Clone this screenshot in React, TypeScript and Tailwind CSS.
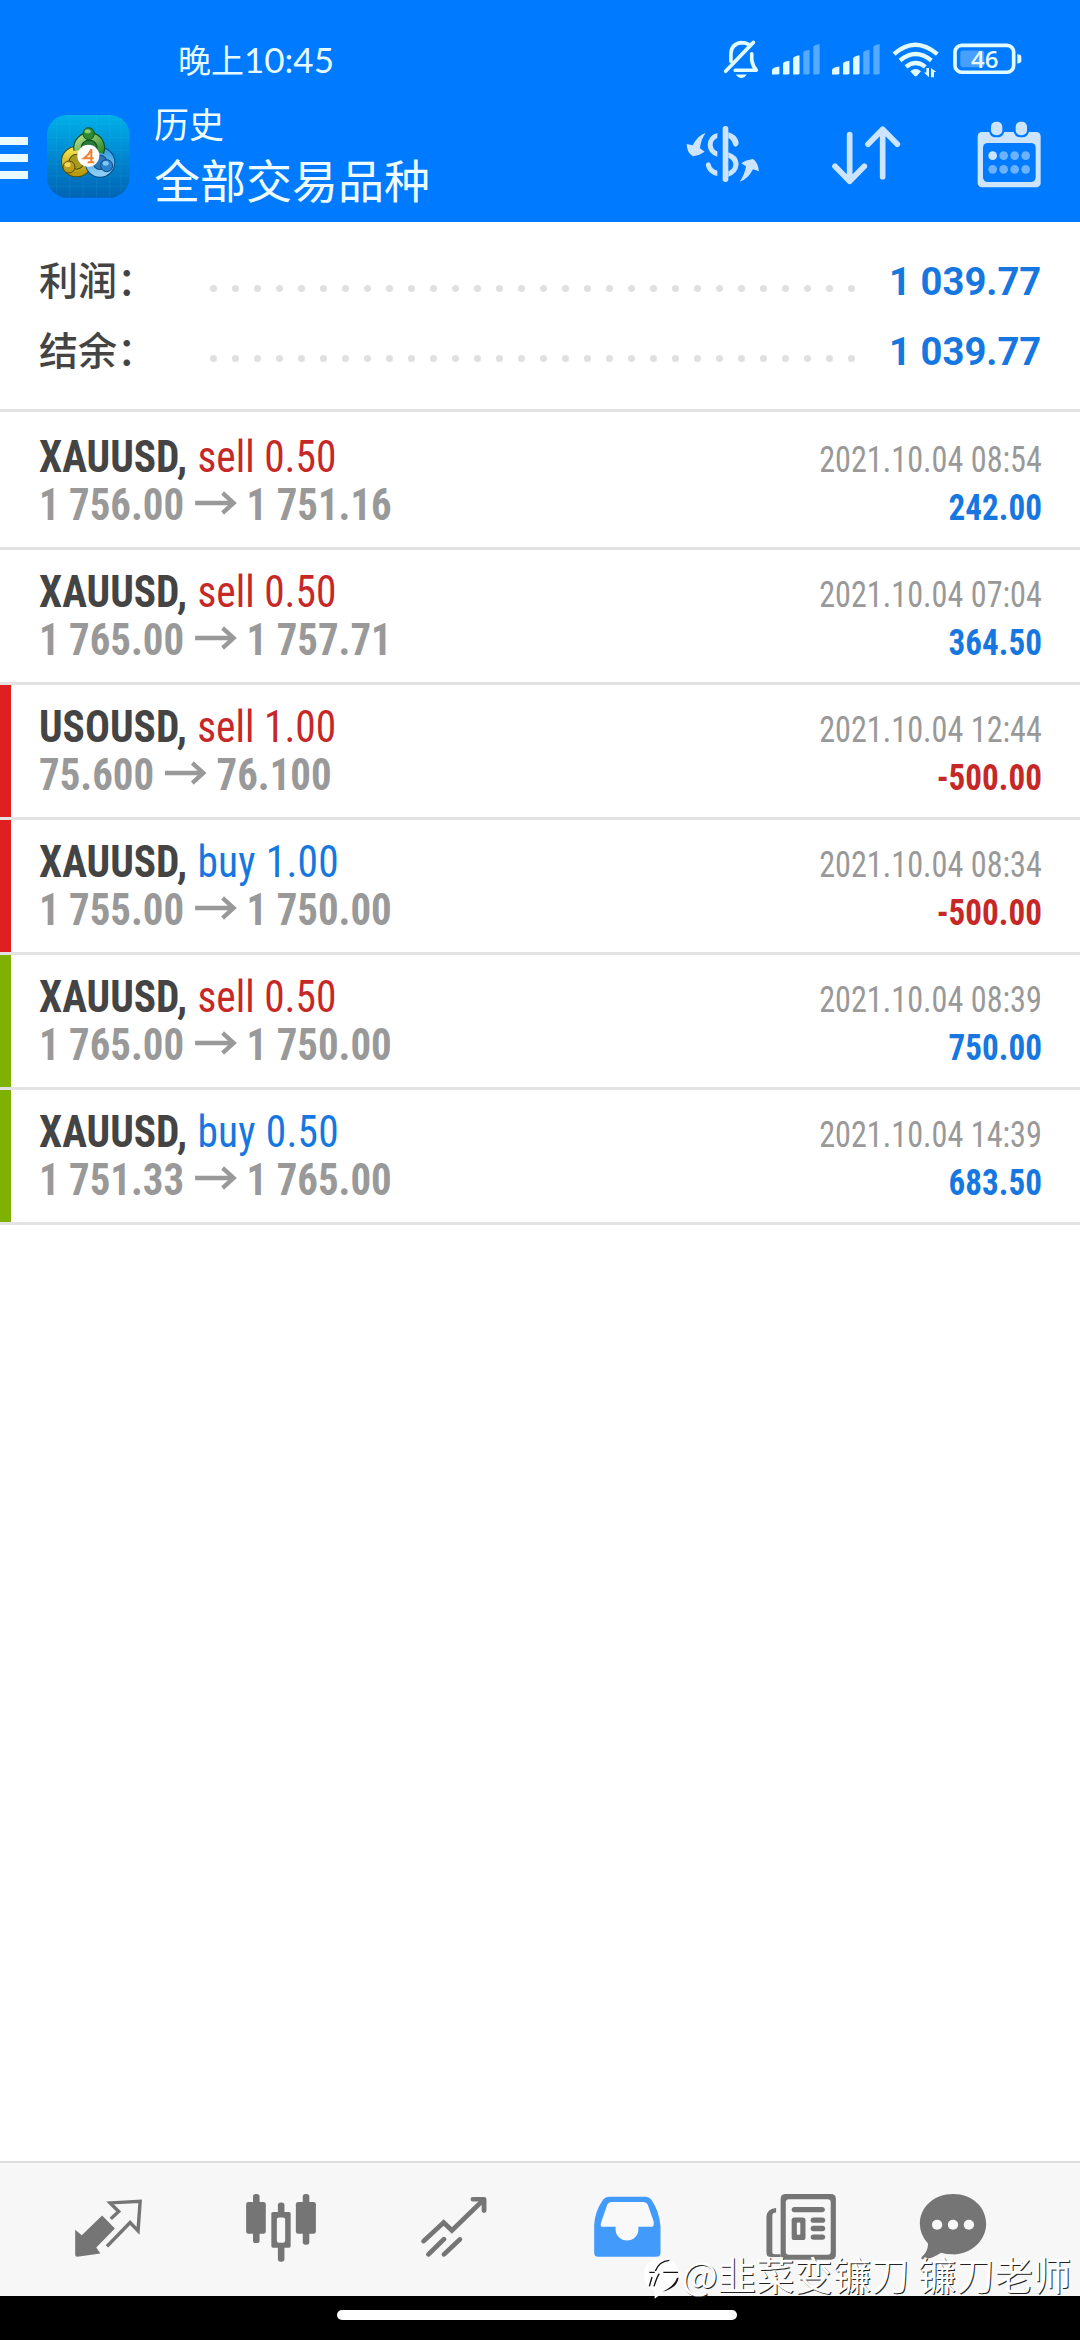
import React from 'react';

interface Deal {
  symbol: string;
  side: 'sell' | 'buy';
  volume: string;
  open: string;
  close: string;
  time: string;
  profit: string;
  mark?: 'sl' | 'tp';
}

const deals: Deal[] = [
  { symbol: 'XAUUSD,', side: 'sell', volume: '0.50', open: '1 756.00', close: '1 751.16', time: '2021.10.04 08:54', profit: '242.00' },
  { symbol: 'XAUUSD,', side: 'sell', volume: '0.50', open: '1 765.00', close: '1 757.71', time: '2021.10.04 07:04', profit: '364.50' },
  { symbol: 'USOUSD,', side: 'sell', volume: '1.00', open: '75.600', close: '76.100', time: '2021.10.04 12:44', profit: '-500.00', mark: 'sl' },
  { symbol: 'XAUUSD,', side: 'buy', volume: '1.00', open: '1 755.00', close: '1 750.00', time: '2021.10.04 08:34', profit: '-500.00', mark: 'sl' },
  { symbol: 'XAUUSD,', side: 'sell', volume: '0.50', open: '1 765.00', close: '1 750.00', time: '2021.10.04 08:39', profit: '750.00', mark: 'tp' },
  { symbol: 'XAUUSD,', side: 'buy', volume: '0.50', open: '1 751.33', close: '1 765.00', time: '2021.10.04 14:39', profit: '683.50', mark: 'tp' },
];

const Signal = () => (
  <svg className="w-[52px] h-[42px]" viewBox="325 115 155 125" preserveAspectRatio="none" fill="#e2fbff">
    <path d="M331 224V210Q333 202 353 200V220Q352 224 347 224Z" />
    <path d="M364 224V191Q366 185 383 183V220Q382 224 377 224Z" />
    <path d="M394 224V175Q396 169 413 166V220Q412 224 407 224Z" />
    <path d="M424 224V158Q426 152 443 150V220Q442 224 437 224Z" fill="#55a9ff" />
    <path d="M454 224V142Q456 136 473 133V220Q472 224 467 224Z" fill="#55a9ff" />
  </svg>
);

const StatusBar = () => (
  <div className="flex h-[100px] items-start pl-[178px] pr-[57px]">
    <span className="mt-[35px] text-[33px] leading-[48px] text-[#e6fbff]">
      晚上<span className="font-['Lato','Noto_Sans_CJK_SC',sans-serif] text-[35px]">10:45</span>
    </span>
    <div className="mt-[38px] ml-auto flex">
      <svg className="mr-[10px] w-[38px] h-[42px]" viewBox="180 115 115 125" preserveAspectRatio="none" fill="none" stroke="#e2fbff" strokeWidth="11" strokeLinecap="round" strokeLinejoin="round">
        <path d="M191 214L275 128" />
        <path d="M207 184V162Q208 133 238 129Q252 129 260 134" />
        <path d="M270 162V181Q273 199 284 211H220" />
        <path d="M222 224H255Q249 234 239 235Q228 234 222 224Z" fill="#e2fbff" stroke="none" />
      </svg>
      <div className="mr-[8px]"><Signal /></div>
      <div className="mr-[9px]"><Signal /></div>
      <svg className="mr-[11px] w-[50px] h-[42px]" viewBox="688 115 150 125" preserveAspectRatio="none" fill="none" stroke="#e2fbff" strokeWidth="13">
        <path d="M697 163Q760 107 827 163" />
        <path d="M715 182Q762 143 809 182" />
        <path d="M733 201Q762 178 791 201" />
        <path d="M746 214Q762 201 778 214L766 227Q762 230 758 227Z" fill="#e2fbff" stroke="none" />
        <path d="M802 204V232L787 218H794V204ZM808 232V204L824 216H817V232Z" fill="#e2fbff" stroke="none" />
      </svg>
      <div className="relative">
        <svg className="w-[71px] h-[42px]" viewBox="872 115 213 125" preserveAspectRatio="none">
          <rect x="881" y="137" width="176" height="80" rx="20" fill="none" stroke="#e2fbff" strokeWidth="11" />
          <rect x="897" y="152" width="72" height="50" rx="8" fill="#479fff" />
          <path d="M1068 163Q1080 163 1080 171V183Q1080 191 1068 191Z" fill="#e2fbff" />
        </svg>
        <span className="absolute left-[19px] top-[8px] font-['Open_Sans',sans-serif] text-[24px] leading-[26px] font-semibold text-[#e8fcff]">46</span>
      </div>
    </div>
  </div>
);

const Logo = () => (
  <svg className="h-[83px] w-[83px]" viewBox="50 45 249 249">
    <defs>
      <linearGradient id="tile" x1="0" y1="0" x2="0" y2="1">
        <stop offset="0" stopColor="#00b0e8" />
        <stop offset="0.5" stopColor="#0088d0" />
        <stop offset="1" stopColor="#0064b4" />
      </linearGradient>
      <linearGradient id="green" x1="0" y1="0" x2="1" y2="1">
        <stop offset="0" stopColor="#b5e08a" />
        <stop offset="1" stopColor="#2d8a2a" />
      </linearGradient>
      <linearGradient id="yellow" x1="0" y1="0" x2="0" y2="1">
        <stop offset="0" stopColor="#f2e04a" />
        <stop offset="1" stopColor="#b99a10" />
      </linearGradient>
      <linearGradient id="sky" x1="0" y1="0" x2="0" y2="1">
        <stop offset="0" stopColor="#3a9fe0" />
        <stop offset="1" stopColor="#8ccdf5" />
      </linearGradient>
    </defs>
    <rect x="50" y="45" width="248" height="248" rx="60" fill="url(#tile)" />
    <path d="M78 60V280M118 45V293M158 45V293M198 45V293M238 45V293M272 60V280M52 72H296M50 112H298M50 152H298M50 192H298M50 228H298M55 260H293" stroke="#4cc4f4" strokeOpacity="0.18" strokeWidth="2" />
    <circle cx="139" cy="185" r="34" fill="#a89a20" stroke="#4b5208" strokeWidth="26" />
    <circle cx="139" cy="185" r="34" fill="none" stroke="url(#yellow)" strokeWidth="20" />
    <circle cx="209" cy="187" r="33" fill="#2877b8" stroke="#0b4a86" strokeWidth="26" />
    <circle cx="209" cy="187" r="33" fill="none" stroke="url(#sky)" strokeWidth="20" />
    <path d="M142 150A35 35 0 1 1 209 157" fill="#2a7a3a" stroke="#0e5522" strokeWidth="26" />
    <path d="M142 150A35 35 0 1 1 209 157" fill="none" stroke="url(#green)" strokeWidth="19" />
    <ellipse cx="175" cy="101" rx="17" ry="18" fill="#2f8a30" stroke="#0e5522" strokeWidth="3" />
    <ellipse cx="172" cy="94" rx="9" ry="6" fill="#8fce72" />
    <circle cx="116" cy="201" r="18" fill="#bd9d16" stroke="#5a4b08" strokeWidth="3" />
    <ellipse cx="112" cy="194" rx="9" ry="7" fill="#efd95e" />
    <circle cx="229" cy="197" r="18" fill="#2b83ca" stroke="#0b4a86" strokeWidth="3" />
    <ellipse cx="226" cy="190" rx="9" ry="7" fill="#85c6f2" />
    <circle cx="174" cy="167" r="33" fill="#fff" />
    <path d="M183 187V148Q176 164 161 175H190M172 187H192" fill="none" stroke="#f08030" strokeWidth="6" />
  </svg>
);

const AppBar = () => (
  <div className="flex h-[122px]">
    <div className="mt-[37px] mr-[19px] flex w-[28px] flex-col gap-[9px]">
      <div className="h-2 bg-[#e9fbff]" />
      <div className="h-2 bg-[#e9fbff]" />
      <div className="h-2 bg-[#e9fbff]" />
    </div>
    <div className="mt-[15px]"><Logo /></div>
    <div className="-mt-px ml-[24px] flex flex-col text-[#eefcff]">
      <span className="text-[35px] leading-[48px]">历史</span>
      <span className="mt-px text-[46px] leading-[60px]">全部交易品种</span>
    </div>
    <div className="mt-5 mr-[31px] ml-auto flex gap-[63px]">
      <svg className="h-[70px] w-[80px]" viewBox="67 360 240 210" fill="#cde4ff">
        <rect x="186" y="378" width="17" height="168" rx="8" />
        <path d="M170 399V414Q156 420 156 434Q157 449 170 454V470Q142 462 141 435Q143 406 170 399Z" />
        <path d="M203 397Q228 403 234 427Q234 438 225 440Q219 440 217 433Q214 419 203 414Z" />
        <path d="M203 457Q233 466 234 493Q231 521 203 530V514Q218 508 218 493Q217 479 203 473Z" />
        <path d="M135 494Q137 487 144 487Q150 489 151 496Q154 508 170 512V528Q140 521 135 494Z" />
        <path d="M135 399Q113 404 96 436L78 432Q79 460 97 469Q117 466 132 455L118 445Q121 417 135 399Z" />
        <path d="M237 545Q261 539 277 508L295 514Q292 487 277 477Q255 480 242 490L256 499Q252 525 237 545Z" />
      </svg>
      <svg className="h-[70px] w-[80px]" viewBox="495 360 240 210" fill="none" stroke="#cde4ff" strokeWidth="17" strokeLinecap="round" strokeLinejoin="round">
        <path d="M566 404V544M522 499L566 544L610 499" />
        <path d="M665 530V388M621 433L665 388L709 433" />
      </svg>
      <svg className="h-[70px] w-[80px]" viewBox="925 360 240 210" fill="#cde4ff">
        <rect x="951" y="396" width="189" height="166" rx="13" />
        <rect x="967" y="429" width="158" height="117" rx="14" fill="#007aff" />
        <rect x="985" y="358" width="46" height="54" rx="20" fill="#007aff" />
        <rect x="1059" y="358" width="46" height="54" rx="20" fill="#007aff" />
        <rect x="991" y="365" width="34" height="41" rx="15" />
        <rect x="1065" y="365" width="34" height="41" rx="15" />
        <circle cx="996" cy="467" r="13" />
        <g fill="#6bb2ff">
          <circle cx="1029" cy="467" r="13" />
          <circle cx="1062" cy="467" r="13" />
          <circle cx="1095" cy="467" r="13" />
          <circle cx="996" cy="508" r="13" />
          <circle cx="1029" cy="508" r="13" />
          <circle cx="1062" cy="508" r="13" />
          <circle cx="1095" cy="508" r="13" />
        </g>
      </svg>
    </div>
  </div>
);

const SummaryRow: React.FC<{ label: string; value: string }> = ({ label, value }) => (
  <div className="flex h-[70px] items-center">
    <span className="mb-[6px] w-[171px] text-[39px] leading-[64px] font-medium text-[#444]">{label}</span>
    <div className="mt-[15px] flex gap-[15px]">
      {Array.from({ length: 30 }, (_, i) => (
        <div key={i} className="size-[7px] rounded-full bg-[#e0e0e0]" />
      ))}
    </div>
    <span className="mt-[2px] ml-auto origin-right scale-x-[0.98] font-['Roboto',sans-serif] text-[39px] leading-[68px] font-bold text-[#1777e0]">{value}</span>
  </div>
);

const DealRow: React.FC<{ deal: Deal }> = ({ deal }) => (
  <div className="flex h-[135px] border-b-[3px] border-[#e3e3e3] font-['Roboto',sans-serif] [font-stretch:75%]">
    <div
      className={`w-[11px] shrink-0 ${deal.mark === 'sl' ? 'bg-[#e02020]' : deal.mark === 'tp' ? 'bg-[#7fb200]' : ''}`}
    />
    <div className="mt-[18px] ml-[28px] text-[44.5px] leading-[48px] whitespace-nowrap">
      <div className="flex origin-left scale-x-[0.93]">
        <span className="font-bold text-[#444]">{deal.symbol}</span>
        <span className={`ml-[11px] ${deal.side === 'sell' ? 'text-[#c62828]' : 'tracking-[0.3px] text-[#1777e0]'}`}>
          {deal.side} {deal.volume}
        </span>
      </div>
      <div className="flex origin-left scale-x-[0.918] font-bold text-[#999]">
        <span>{deal.open}</span>
        <svg className="mr-[10px] ml-[12px] mt-[10px] h-[24px] w-[46px]" viewBox="0 0 46 24" fill="none" stroke="#999" strokeWidth="4.5">
          <path d="M0 12H42M30 2L42 12L30 22" />
        </svg>
        <span>{deal.close}</span>
      </div>
    </div>
    <div className="mt-[21px] mr-[38px] ml-auto text-right text-[36px] leading-[48px] whitespace-nowrap">
      <div className="origin-right scale-x-[0.895] text-[#999]">{deal.time}</div>
      <div className={`origin-right scale-x-[0.92] font-bold ${deal.profit.startsWith('-') ? 'text-[#c62828]' : 'text-[#1777e0]'}`}>{deal.profit}</div>
    </div>
  </div>
);

const NavBar = () => (
  <div className="flex h-[135px] gap-[97px] border-t-2 border-[#dedede] bg-[#f7f7f7] pt-[27px] pl-[70px]">
    <svg className="h-[73px] w-[76px]" viewBox="204 120 220 220" preserveAspectRatio="none">
      <path d="M297 197L334 236L280 293L292 311L225 321Q219 321 219 315V240L238 256Z" fill="#757575" />
      <path d="M322 207L345 185L320 159L407 154L401 243L378 218L311 290" fill="none" stroke="#757575" strokeWidth="10" />
    </svg>
    <svg className="h-[73px] w-[76px]" viewBox="706 120 220 220" preserveAspectRatio="none" fill="#757575">
      <rect x="735" y="132" width="19" height="148" rx="8" />
      <rect x="715" y="156" width="57" height="96" rx="7" />
      <rect x="879" y="132" width="19" height="153" rx="8" />
      <rect x="859" y="156" width="58" height="96" rx="7" />
      <rect x="807" y="158" width="19" height="178" rx="8" />
      <rect x="788" y="186" width="56" height="108" rx="5" />
      <rect x="804" y="203" width="24" height="76" rx="6" fill="#f7f7f7" />
    </svg>
    <svg className="h-[73px] w-[76px]" viewBox="1209 120 220 220" preserveAspectRatio="none" fill="none" stroke="#757575" strokeWidth="14" strokeLinecap="round">
      <path d="M1231 274L1289 218L1313 242L1402 152" />
      <path d="M1374 148H1406V182" strokeLinejoin="round" />
      <path d="M1245 314L1290 268M1290 314L1336 269" />
    </svg>
    <svg className="h-[73px] w-[76px]" viewBox="144 120 220 220" preserveAspectRatio="none">
      <path d="M203 140H308Q318 140 324 149Q348 185 351 230V309Q351 321 339 321H171Q159 321 159 309V225Q161 185 185 149Q191 140 203 140Z" fill="#429bfb" />
      <path d="M208 156H302Q310 156 314 164L331 214Q333 231 326 231H287V239A33 33 0 0 1 221 239V231H182Q176 231 179 218L197 164Q201 156 208 156Z" fill="#f9f9f9" />
    </svg>
    <svg className="ml-px h-[73px] w-[76px]" viewBox="647 120 220 220" preserveAspectRatio="none" fill="#757575">
      <path d="M685 174V188Q674 188 674 198V309Q675 314 686 314H698V322H670Q657 322 657 309V198Q660 176 685 174Z" />
      <rect x="698" y="132" width="160" height="198" rx="14" />
      <rect x="713" y="148" width="130" height="167" rx="9" fill="#f7f7f7" />
      <rect x="730" y="171" width="96" height="16" rx="8" />
      <rect x="730" y="203" width="40" height="68" rx="8" />
      <rect x="745" y="218" width="10" height="37" rx="3" fill="#f7f7f7" />
      <rect x="785" y="203" width="42" height="16" rx="8" />
      <rect x="785" y="228" width="42" height="16" rx="8" />
      <rect x="785" y="254" width="42" height="16" rx="8" />
    </svg>
    <svg className="-ml-[21px] h-[73px] w-[76px]" viewBox="1089 120 220 220" preserveAspectRatio="none">
      <path d="M1199 132C1255 132 1295 172 1295 222C1295 275 1248 315 1199 314Q1180 314 1164 309Q1140 327 1112 329Q1104 328 1109 321Q1126 307 1127 282Q1103 255 1103 222C1103 172 1144 132 1199 132Z" fill="#757575" />
      <circle cx="1153" cy="225" r="15" fill="#f7f7f7" />
      <circle cx="1199" cy="225" r="15" fill="#f7f7f7" />
      <circle cx="1245" cy="225" r="15" fill="#f7f7f7" />
    </svg>
  </div>
);

const Watermark = () => (
  <div className="absolute right-[9px] bottom-[38px] flex items-center text-[38.3px] leading-[56px] whitespace-nowrap text-white [text-shadow:1px_1px_0_#222]">
    <svg className="mt-[8px] mr-[2px] h-[42px] w-[36px]" viewBox="8 62 108 126">
      <path d="M62 64C92 64 112 84 112 114C112 142 90 162 66 168L40 187V164C20 158 8 140 8 114C8 84 32 64 62 64Z" fill="#fff" />
      <path d="M24 108H40M66 108H110" fill="none" stroke="#111" strokeWidth="4" />
      <path d="M42 104Q54 74 84 72M54 112Q48 118 38 150M24 150L32 122" fill="none" stroke="#111" strokeWidth="4" />
      <path d="M112 124Q106 156 64 166Q98 150 107 124Z" fill="#111" />
    </svg>
    <span>@韭菜变镰刀 镰刀老师</span>
  </div>
);

const App: React.FC = () => {
  return (
    <div className="relative flex h-[2340px] w-[1080px] flex-col overflow-hidden bg-white font-['Noto_Sans_CJK_SC',sans-serif]">
      <header className="h-[222px] shrink-0 bg-[#007aff]">
        <StatusBar />
        <AppBar />
      </header>
      <section className="h-[190px] shrink-0 border-b-[3px] border-[#e3e3e3] pt-[24px] pr-[39px] pl-[39px]">
        <SummaryRow label="利润：" value="1 039.77" />
        <SummaryRow label="结余：" value="1 039.77" />
      </section>
      <main className="flex-1 pt-[3px]">
        {deals.map((deal, i) => (
          <DealRow key={i} deal={deal} />
        ))}
      </main>
      <NavBar />
      <div className="flex h-[44px] shrink-0 justify-center bg-black pt-[14px] pr-[7px]">
        <div className="h-[10px] w-[400px] rounded-full bg-white" />
      </div>
      <Watermark />
    </div>
  );
};

export default App;
